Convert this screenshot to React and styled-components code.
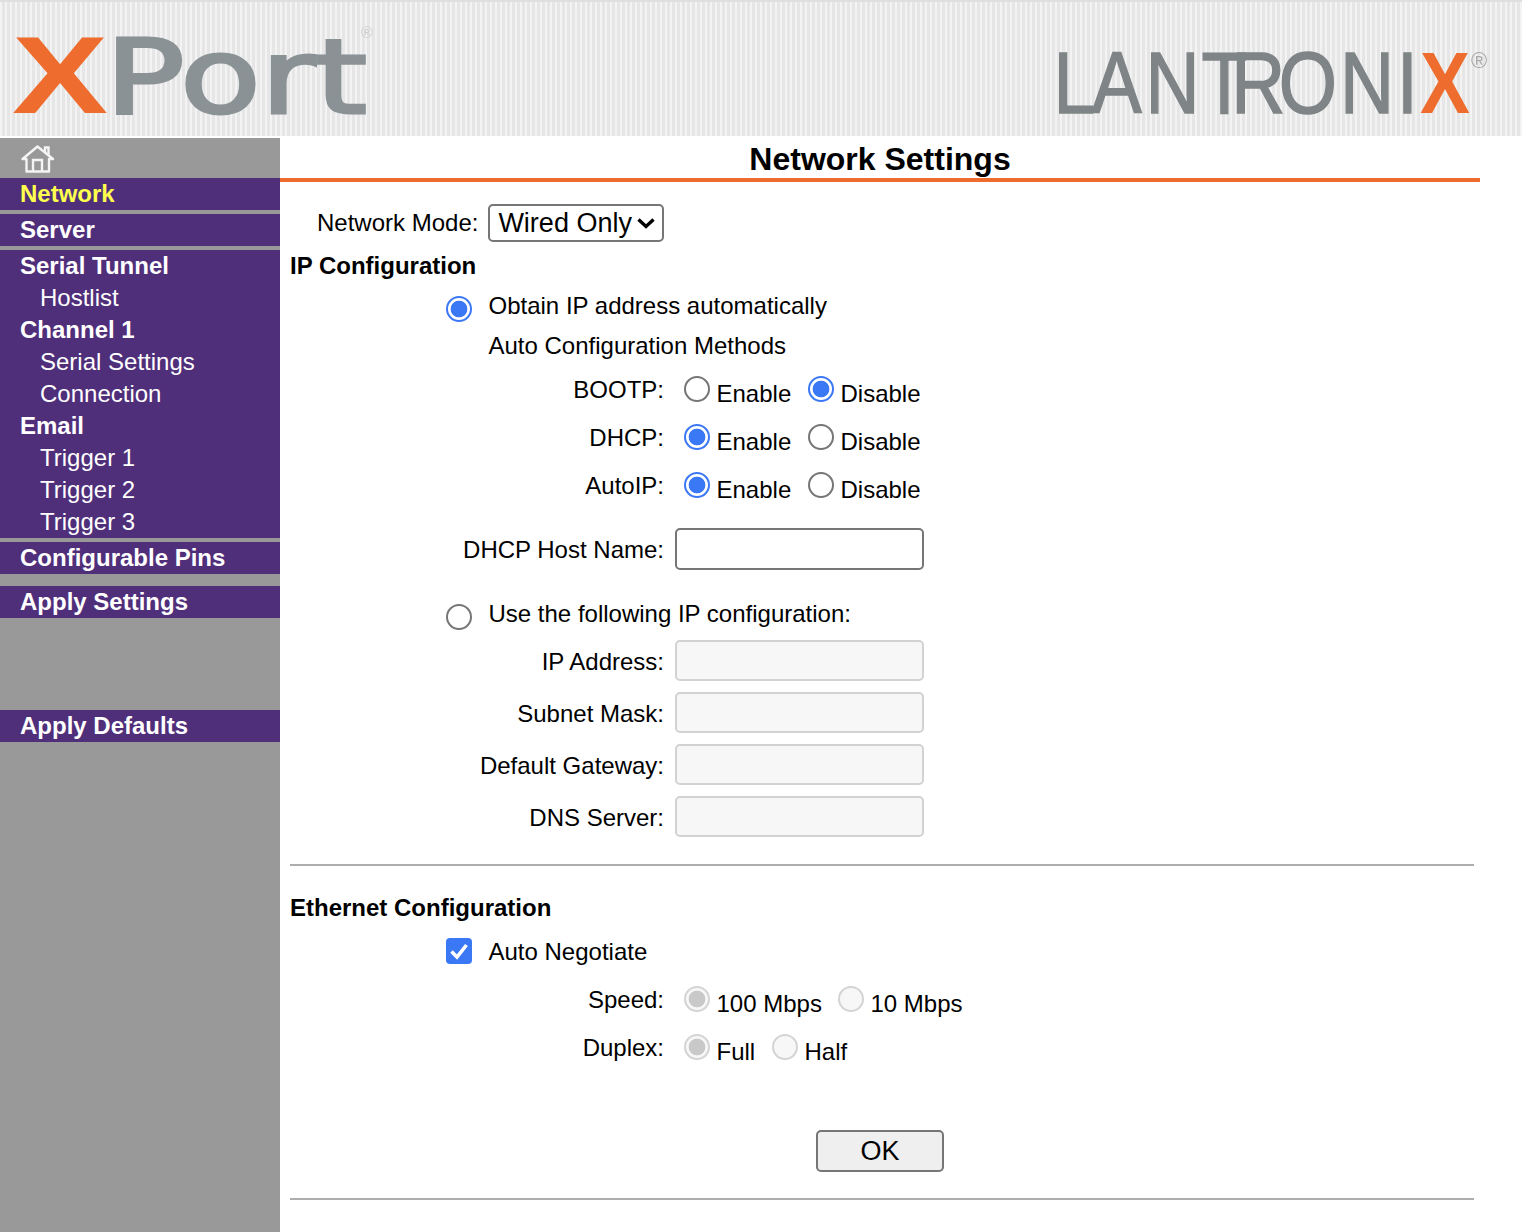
import React from "react";
import styled, { createGlobalStyle } from "styled-components";

const GlobalStyle = createGlobalStyle`
  html, body {
    margin: 0;
    padding: 0;
    background: #fff;
    overflow: hidden;
  }
  body {
    font-family: "Liberation Sans", Arial, sans-serif;
    font-size: 24px;
    color: #000;
  }
`;

const Page = styled.div`
  width: 1522px;
  height: 1232px;
  display: flex;
  flex-direction: column;
  overflow: hidden;
`;

const Banner = styled.header`
  height: 136px;
  flex: none;
  box-sizing: border-box;
  border-top: 2px solid #dfdfdf;
  display: flex;
  justify-content: space-between;
  align-items: flex-start;
  background: repeating-linear-gradient(90deg, #f3f3f3 0 2px, #e6e6e6 2px 5px);
`;

const XPortLogo = styled.svg`
  width: 400px;
  height: 134px;
  flex: none;
  overflow: visible;
  filter: blur(0.5px);
`;

const LantronixLogo = styled.svg`
  width: 482px;
  height: 134px;
  flex: none;
  overflow: visible;
  filter: blur(0.5px);
`;

const Body = styled.div`
  flex: 1;
  display: flex;
  margin-top: 2px;
`;

const Sidebar = styled.nav`
  width: 280px;
  flex: none;
  background: #999;
  display: flex;
  flex-direction: column;
`;

const HomeRow = styled.div`
  height: 40px;
  padding: 7px 0 0 21px;
  box-sizing: border-box;
`;

const MenuGroup = styled.div`
  background: #4f2e7a;
  margin-bottom: ${({ $gap }) => $gap}px;
`;

const MenuItem = styled.div`
  height: 32px;
  line-height: 32px;
  padding-left: ${({ $sub }) => ($sub ? 40 : 20)}px;
  font-weight: ${({ $sub }) => ($sub ? 400 : 700)};
  color: ${({ $active }) => ($active ? "#ffff4d" : "#fff")};
  white-space: nowrap;
`;

const Main = styled.main`
  width: 1200px;
  flex: none;
`;

const Title = styled.h1`
  margin: 0;
  height: 44px;
  box-sizing: border-box;
  border-bottom: 4px solid #ee6c2d;
  text-align: center;
  font-size: 32px;
  line-height: 42px;
  font-weight: 700;
`;

const Form = styled.form`
  padding: 21px 6px 0 10px;
`;

const ModeRow = styled.div`
  height: 40px;
  display: flex;
  align-items: center;
  padding-left: 27px;
  gap: 10px;
`;

const SelectBox = styled.div`
  position: relative;
  width: 176px;
  height: 38px;
`;

const ModeSelect = styled.select`
  appearance: none;
  width: 100%;
  height: 100%;
  box-sizing: border-box;
  border: 2px solid #767676;
  border-radius: 5px;
  background: #fff;
  padding: 0 0 0 8px;
  font-family: inherit;
  font-size: 27px;
  color: #000;
`;

const Chevron = styled.svg`
  position: absolute;
  right: 8px;
  top: 13px;
  width: 20px;
  height: 12px;
  pointer-events: none;
`;

const SectionTitle = styled.h2`
  margin: ${({ $top }) => $top || 0}px 0 0;
  font-size: 24px;
  font-weight: 700;
  line-height: 28px;
  height: ${({ $height }) => $height}px;
`;

const OptionRow = styled.label`
  display: flex;
  align-items: flex-start;
  height: ${({ $height }) => $height}px;
  padding-left: 156px;
  line-height: 28px;
`;

const PlainRow = styled.div`
  height: ${({ $height }) => $height}px;
  padding-left: 198.5px;
  line-height: 28px;
`;

const LeadControl = styled.span`
  width: 42.5px;
  flex: none;
  display: block;
  padding-top: ${({ $top }) => $top}px;
`;

const Radio = styled.input.attrs({ type: "radio" })`
  appearance: none;
  display: block;
  flex: none;
  margin: 0;
  width: 26px;
  height: 26px;
  box-sizing: border-box;
  border-radius: 50%;
  border: 2px solid #767676;
  background: #fff;
  &:checked {
    border-color: #3b78f6;
    background: radial-gradient(circle, #3b78f6 0 8px, #fff 8.7px);
  }
  &:disabled {
    border-color: #d4d4d4;
    background: #f7f7f7;
  }
  &:disabled:checked {
    border-color: #d4d4d4;
    background: radial-gradient(circle, #c9c9c9 0 8px, #f7f7f7 8.7px);
  }
`;

const CheckMark = styled.span`
  display: flex;
  align-items: center;
  justify-content: center;
  width: 26px;
  height: 26px;
  background: #3b78f6;
  border-radius: 4px;
`;

const FieldRow = styled.div`
  display: flex;
  align-items: flex-start;
  height: ${({ $height }) => $height}px;
  margin-top: ${({ $top }) => $top || 0}px;
`;

const FieldLabel = styled.label`
  width: 374px;
  flex: none;
  text-align: right;
  line-height: 28px;
  padding-top: ${({ $top }) => $top || 0}px;
`;

const Choices = styled.div`
  display: flex;
  align-items: flex-start;
  margin-left: 20px;
`;

const Choice = styled.label`
  display: flex;
  align-items: flex-start;
  width: ${({ $width }) => $width}px;
`;

const ChoiceText = styled.span`
  margin: 4px 0 0 6.5px;
  line-height: 28px;
  white-space: nowrap;
`;

const TextInput = styled.input`
  display: block;
  width: 249px;
  height: ${({ $height }) => $height}px;
  box-sizing: border-box;
  margin-left: 11px;
  border: 2px solid ${({ disabled }) => (disabled ? "#d2d2d2" : "#767676")};
  border-radius: 5px;
  background: ${({ disabled }) => (disabled ? "#f7f7f7" : "#fff")};
  padding: 0 8px;
  font: inherit;
`;

const Rule = styled.hr`
  margin: ${({ $top }) => $top}px 0 ${({ $bottom }) => $bottom}px;
  border: 0;
  height: 2px;
  background: #adadad;
`;

const ButtonRow = styled.div`
  display: flex;
  justify-content: center;
  margin: ${({ $top }) => $top}px -6px 0 -10px;
`;

const OkButton = styled.button`
  width: 128px;
  height: 42px;
  box-sizing: border-box;
  border: 2px solid #767676;
  border-radius: 5px;
  background: #efefef;
  font-family: inherit;
  font-size: 27px;
  color: #000;
  padding: 0;
`;

const HomeIcon = () => (
  <svg width="34" height="28" viewBox="0 0 34 28" fill="none" stroke="#f4f4f4" strokeWidth="2.4">
    <path d="M1.5 14 L16.5 1.5 L32 14 H28 V26.5 H5.5 V14 Z" strokeLinejoin="round" />
    <path d="M12 26 V15 H21 V26" />
    <path d="M24 7 V2.5 H27.5 V10" />
  </svg>
);

const ConfigRadioRow = ({ label, name, on }) => (
  <FieldRow $height={48}>
    <FieldLabel>{label}</FieldLabel>
    <Choices>
      <Choice $width={124}>
        <Radio name={name} defaultChecked={on} />
        <ChoiceText>Enable</ChoiceText>
      </Choice>
      <Choice>
        <Radio name={name} defaultChecked={!on} />
        <ChoiceText>Disable</ChoiceText>
      </Choice>
    </Choices>
  </FieldRow>
);

const StaticField = ({ label }) => (
  <FieldRow $height={52}>
    <FieldLabel $top={8}>{label}</FieldLabel>
    <TextInput disabled $height={41} />
  </FieldRow>
);

const DisabledRow = ({ label, first, second, width }) => (
  <FieldRow $height={48}>
    <FieldLabel>{label}</FieldLabel>
    <Choices>
      <Choice $width={width}>
        <Radio name={label} disabled defaultChecked />
        <ChoiceText>{first}</ChoiceText>
      </Choice>
      <Choice>
        <Radio name={label} disabled />
        <ChoiceText>{second}</ChoiceText>
      </Choice>
    </Choices>
  </FieldRow>
);

export default function App() {
  return (
    <Page>
      <GlobalStyle />
      <Banner>
        <XPortLogo viewBox="0 0 400 134">
          <text y="111" x="12" fontFamily="Liberation Sans" fontSize="110" fontWeight="700" fill="#ee6c2d" textLength="96" lengthAdjust="spacingAndGlyphs">X</text>
          <text y="111" x="105" fontFamily="DejaVu Sans" fontSize="104" fill="#8b9295" stroke="#8b9295" strokeWidth="3" textLength="262" lengthAdjust="spacingAndGlyphs">Port</text>
          <text y="36" x="361" fontFamily="Liberation Sans" fontSize="16" fill="#cfcfcf">®</text>
        </XPortLogo>
        <LantronixLogo viewBox="0 0 482 134">
          <g transform="scale(0.85 1)">
            <text y="111" x="16 61 124 190 225 281 353 420" fontFamily="Liberation Sans" fontSize="88" fill="#7f8486" stroke="#7f8486" strokeWidth="1.5">
              LANTRONI<tspan x="447" fontWeight="700" fill="#ee6c2d" stroke="none">X</tspan>
            </text>
          </g>
          <text y="66" x="431" fontFamily="Liberation Sans" fontSize="22" fill="#a8a8a8">®</text>
        </LantronixLogo>
      </Banner>
      <Body>
        <Sidebar>
          <HomeRow><HomeIcon /></HomeRow>
          <MenuGroup $gap={4}><MenuItem $active>Network</MenuItem></MenuGroup>
          <MenuGroup $gap={4}><MenuItem>Server</MenuItem></MenuGroup>
          <MenuGroup $gap={4}>
            <MenuItem>Serial Tunnel</MenuItem>
            <MenuItem $sub>Hostlist</MenuItem>
            <MenuItem>Channel 1</MenuItem>
            <MenuItem $sub>Serial Settings</MenuItem>
            <MenuItem $sub>Connection</MenuItem>
            <MenuItem>Email</MenuItem>
            <MenuItem $sub>Trigger 1</MenuItem>
            <MenuItem $sub>Trigger 2</MenuItem>
            <MenuItem $sub>Trigger 3</MenuItem>
          </MenuGroup>
          <MenuGroup $gap={12}><MenuItem>Configurable Pins</MenuItem></MenuGroup>
          <MenuGroup $gap={92}><MenuItem>Apply Settings</MenuItem></MenuGroup>
          <MenuGroup $gap={0}><MenuItem>Apply Defaults</MenuItem></MenuGroup>
        </Sidebar>
        <Main>
          <Title>Network Settings</Title>
          <Form>
            <ModeRow>
              <label>Network Mode:</label>
              <SelectBox>
                <ModeSelect defaultValue="wired">
                  <option value="wired">Wired Only</option>
                </ModeSelect>
                <Chevron viewBox="0 0 20 12" fill="none" stroke="#000" strokeWidth="3.4">
                  <path d="M2.5 2.5 L10 9.5 L17.5 2.5" />
                </Chevron>
              </SelectBox>
            </ModeRow>
            <SectionTitle $top={9} $height={40}>IP Configuration</SectionTitle>
            <OptionRow $height={40}>
              <LeadControl $top={4}><Radio name="ipmode" defaultChecked /></LeadControl>
              Obtain IP address automatically
            </OptionRow>
            <PlainRow $height={44}>Auto Configuration Methods</PlainRow>
            <ConfigRadioRow label="BOOTP:" name="bootp" on={false} />
            <ConfigRadioRow label="DHCP:" name="dhcp" on />
            <ConfigRadioRow label="AutoIP:" name="autoip" on />
            <FieldRow $top={8} $height={72}>
              <FieldLabel $top={8}>DHCP Host Name:</FieldLabel>
              <TextInput $height={42} />
            </FieldRow>
            <OptionRow $height={40}>
              <LeadControl $top={4}><Radio name="ipmode" /></LeadControl>
              Use the following IP configuration:
            </OptionRow>
            <StaticField label="IP Address:" />
            <StaticField label="Subnet Mask:" />
            <StaticField label="Default Gateway:" />
            <StaticField label="DNS Server:" />
            <Rule $top={16} $bottom={28} />
            <SectionTitle $height={44}>Ethernet Configuration</SectionTitle>
            <OptionRow $height={48}>
              <LeadControl $top={0}>
                <CheckMark>
                  <svg width="20" height="20" viewBox="0 0 20 20" fill="none" stroke="#fff" strokeWidth="3.6">
                    <path d="M2.5 10.5 L8 16 L17.5 4" />
                  </svg>
                </CheckMark>
              </LeadControl>
              Auto Negotiate
            </OptionRow>
            <DisabledRow label="Speed:" first="100 Mbps" second="10 Mbps" width={154} />
            <DisabledRow label="Duplex:" first="Full" second="Half" width={88} />
            <ButtonRow $top={48}><OkButton type="button">OK</OkButton></ButtonRow>
            <Rule $top={26} $bottom={0} />
          </Form>
        </Main>
      </Body>
    </Page>
  );
}
